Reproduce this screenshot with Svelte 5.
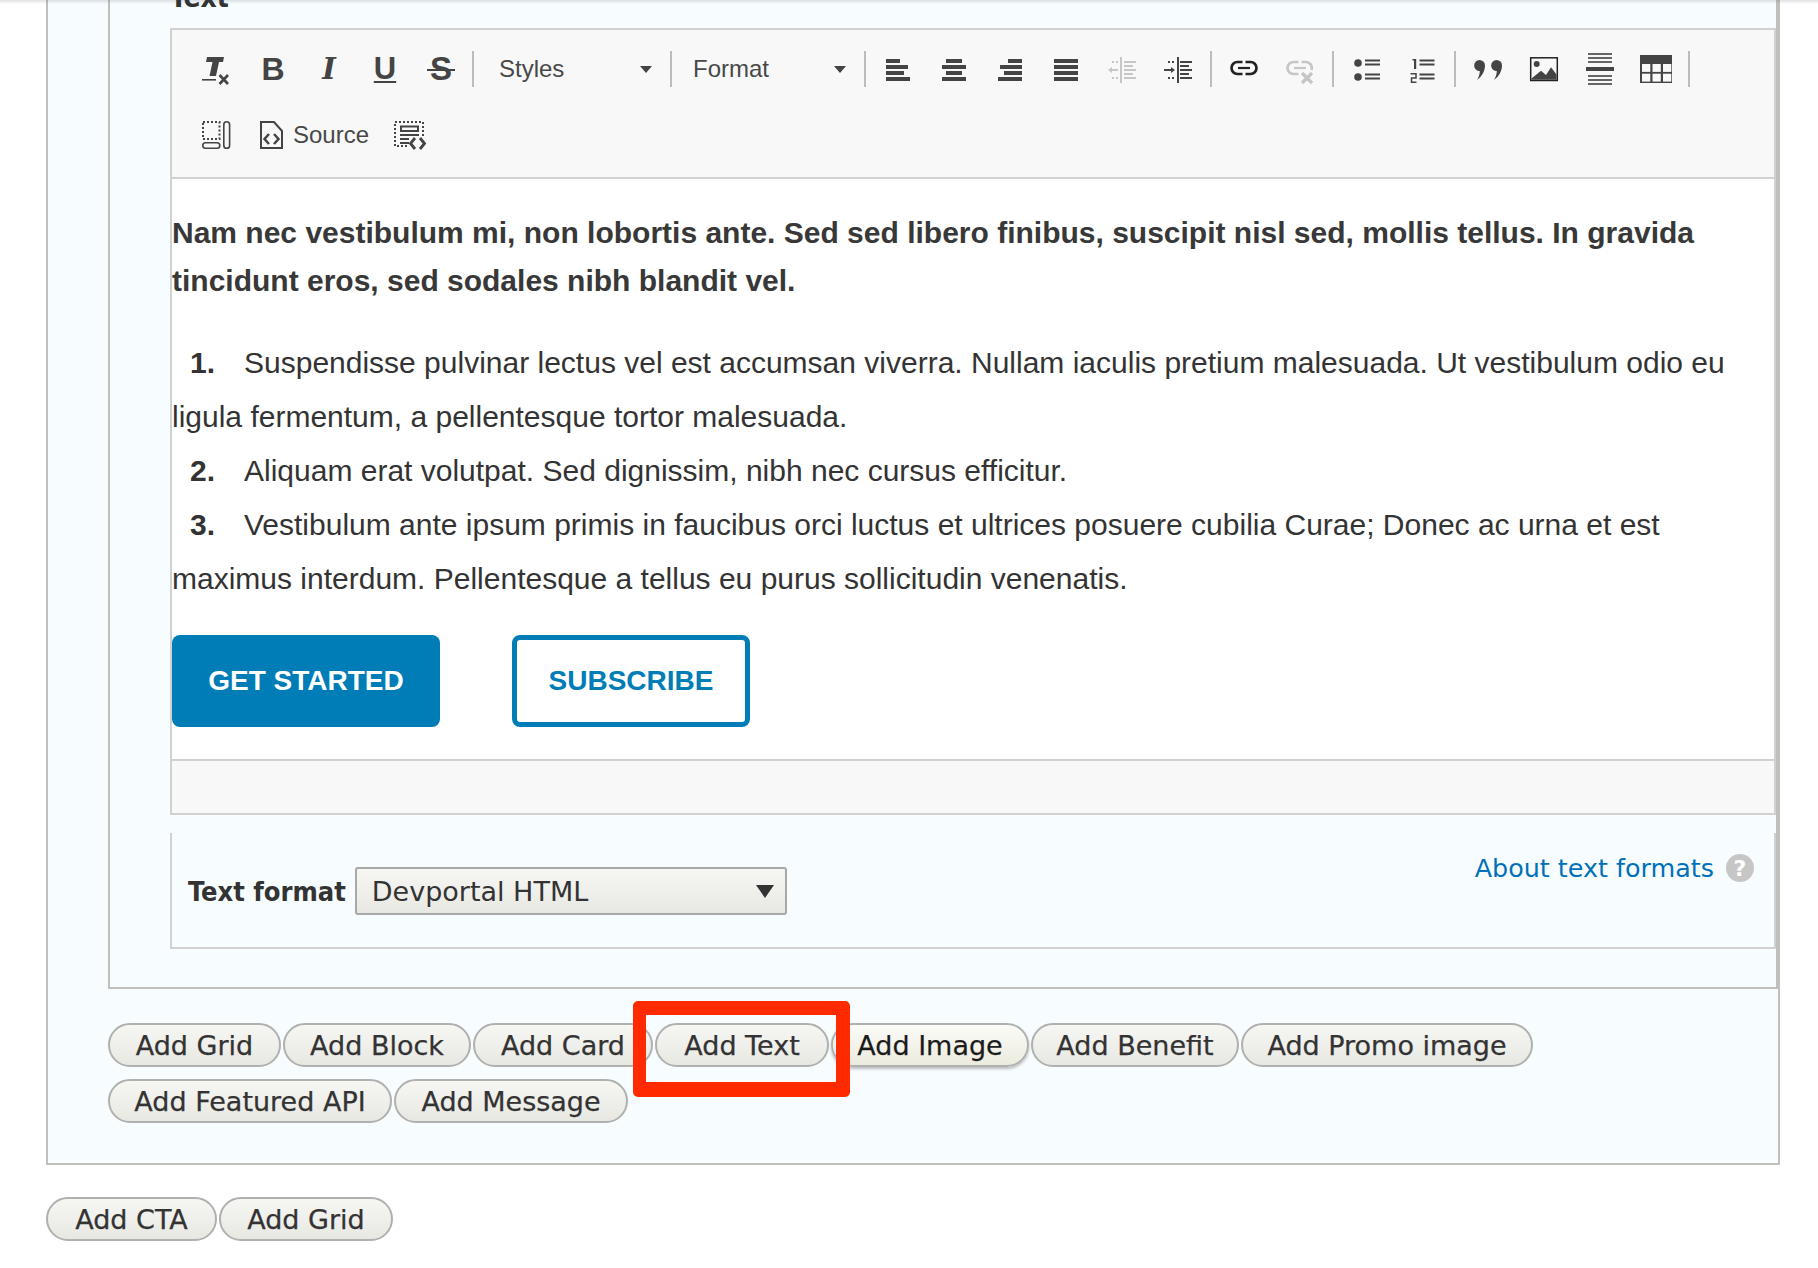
<script>
  const row1 = [['Add Grid',173],['Add Block',188],['Add Card',180],['Add Text',174],['Add Image',198],['Add Benefit',208],['Add Promo image',292],['Add Featured API',284],['Add Message',234]];
  const row2 = [['Add CTA',171],['Add Grid',174]];
  const items = [
    'Suspendisse pulvinar lectus vel est accumsan viverra. Nullam iaculis pretium malesuada. Ut vestibulum odio eu ligula fermentum, a pellentesque tortor malesuada.',
    'Aliquam erat volutpat. Sed dignissim, nibh nec cursus efficitur.',
    'Vestibulum ante ipsum primis in faucibus orci luctus et ultrices posuere cubilia Curae; Donec ac urna et est maximus interdum. Pellentesque a tellus eu purus sollicitudin venenatis.'
  ];
  const bars = {
    left: [[2,14],[2,22],[2,18],[2,24]],
    center: [[6,16],[2,24],[6,16],[2,24]],
    right: [[12,14],[4,22],[8,18],[2,24]],
    justify: [[2,24],[2,24],[2,24],[2,24]]
  };
</script>

<div class="shade"></div>
<div class="page">
  <div class="outer">
    <div class="inner">
      <div class="heading">Text</div>
      <div class="editor">
        <div class="toolbar">
          <div class="tbrow">
            <span class="slot"><svg class="ic" viewBox="0 0 28 28"><path d="M5 2H22L21 7H17L14 21H7.5L10.500 7H4Z" fill="#444"/><rect x="0" y="24" width="14" height="1.600" fill="#444"/><path d="M17.500 20L26 29M26 20L17.500 29" stroke="#444" stroke-width="2.600" fill="none"/></svg></span>
            <span class="slot"><span class="gl b">B</span></span>
            <span class="slot"><span class="gl i">I</span></span>
            <span class="slot"><span class="gl u">U</span></span>
            <span class="slot"><span class="gl s">S</span></span>
            <span class="sep"></span>
            <span class="combo styles">Styles<span class="caret"></span></span>
            <span class="sep"></span>
            <span class="combo format">Format<span class="caret"></span></span>
            <span class="sep"></span>
            {#each Object.values(bars) as set}
              <span class="slot"><svg class="ic" viewBox="0 0 28 28">{#each set as b, n}<rect x={b[0]} y={4 + n * 6} width={b[1]} height="4" fill="#444"/>{/each}</svg></span>
            {/each}
            <span class="slot"><svg class="ic" viewBox="0 0 28 28" fill="#c6c6c6"><rect x="12" y="2" width="2" height="26"/><rect x="16" y="6" width="12" height="2"/><rect x="16" y="10" width="9" height="2"/><rect x="16" y="14" width="12" height="2"/><rect x="16" y="18" width="9" height="2"/><rect x="16" y="22" width="12" height="2"/><path d="M0 15L4 12V14H10V16H4V18Z"/><rect x="4" y="6" width="2" height="2"/><rect x="8" y="6" width="2" height="2"/><rect x="4" y="22" width="2" height="2"/><rect x="8" y="22" width="2" height="2"/></svg></span>
            <span class="slot"><svg class="ic" viewBox="0 0 28 28" fill="#444"><rect x="13" y="2" width="2" height="26"/><rect x="16" y="6" width="12" height="2"/><rect x="16" y="10" width="9" height="2"/><rect x="16" y="14" width="12" height="2"/><rect x="16" y="18" width="9" height="2"/><rect x="16" y="22" width="12" height="2"/><path d="M11 15L7 12V14H0V16H7V18Z"/><rect x="4" y="6" width="2" height="2"/><rect x="8" y="6" width="2" height="2"/><rect x="4" y="22" width="2" height="2"/><rect x="8" y="22" width="2" height="2"/></svg></span>
            <span class="sep"></span>
            <span class="slot"><svg class="ic" viewBox="0 0 28 28" fill="none" stroke="#222" stroke-width="2.700"><path d="M12.500 7H7.500a6 6 0 0 0 0 12H12.500"/><path d="M15.500 7H20.500a6 6 0 0 1 0 12H15.500"/><path d="M8 13H20" stroke-width="2.200"/></svg></span>
            <span class="slot"><svg class="ic" viewBox="0 0 28 28" fill="none" stroke="#c6c6c6" stroke-width="2.700"><path d="M12.500 7H7.500a6 6 0 0 0 0 12H12.500"/><path d="M15.500 7H20.500a6 6 0 0 1 5 8"/><path d="M8 13H20" stroke-width="2.200"/><path d="M16 18L26 28M26 18L16 28" stroke-width="3.400"/></svg></span>
            <span class="sep"></span>
            <span class="slot"><svg class="ic" viewBox="0 0 28 28" fill="#444"><circle cx="6" cy="8" r="3.800"/><circle cx="6" cy="22" r="3.800"/><rect x="13" y="4.500" width="15" height="2"/><rect x="13" y="8.500" width="15" height="2"/><rect x="13" y="18.500" width="15" height="2"/><rect x="13" y="22.500" width="15" height="2"/></svg></span>
            <span class="slot"><svg class="ic" viewBox="0 0 28 28" fill="#444"><rect x="6" y="4" width="2.200" height="10"/><rect x="4.500" y="4" width="2" height="1.500"/><path d="M2.500 18.700H8V23H3.500V27.200H8.500" fill="none" stroke="#444" stroke-width="1.500"/><rect x="11.500" y="4.500" width="15" height="2"/><rect x="11.500" y="8.500" width="15" height="2"/><rect x="11.500" y="18.500" width="15" height="2"/><rect x="11.500" y="22.500" width="15" height="2"/></svg></span>
            <span class="sep"></span>
            <span class="slot"><svg class="ic" viewBox="0 0 28 28" fill="#444"><path d="M5.500 5a5.500 5.500 0 0 1 5.500 5.500c0 5.500-3 11-8 14.500 1.500-2.500 2.800-5.500 2.800-9a5.500 5.500 0 0 1-.3-11z"/><path d="M22.500 5a5.500 5.500 0 0 1 5.500 5.500c0 5.500-3 11-8 14.500 1.500-2.500 2.800-5.500 2.800-9a5.500 5.500 0 0 1-.3-11z"/></svg></span>
            <span class="slot"><svg class="ic" viewBox="0 0 28 28"><rect x=".7" y="2.800" width="26.600" height="22.700" fill="#f8f8f8" stroke="#222" stroke-width="1.500"/><circle cx="6.700" cy="9" r="3" fill="#444"/><path d="M1.500 24.800V23.500L11 15.700L16 20L21 12.300L26.500 19.500V24.800Z" fill="#444"/></svg></span>
            <span class="slot"><svg class="ic" viewBox="0 0 28 28" fill="#666"><rect x="2" y="-2" width="24" height="2"/><rect x="2" y="2" width="24" height="2"/><rect x="2" y="6" width="24" height="2"/><rect x="0" y="12" width="28" height="4" fill="#444"/><rect x="2" y="20" width="24" height="2"/><rect x="2" y="24" width="24" height="2"/><rect x="2" y="28" width="24" height="2"/></svg></span>
            <span class="slot"><svg class="ic" viewBox="0 0 28 28"><rect x="-2" y="0" width="32" height="28" fill="#444"/>{#each [0, 10.500, 21] as x}{#each [9, 18.700] as y}<rect {x} {y} width="8.300" height="7.900" fill="#f8f8f8"/>{/each}{/each}</svg></span>
            <span class="sep"></span>
          </div>
          <div class="tbrow">
            <span class="slot"><svg class="ic" viewBox="0 0 28 28" fill="none" stroke="#444"><rect x="1" y="1" width="16.500" height="17" stroke-width="2" stroke-dasharray="2 2"/><rect x="21.800" y=".8" width="5.800" height="26.500" rx="2.900" stroke-width="1.600"/><rect x=".8" y="21.800" width="17" height="5.500" rx="2.700" stroke-width="1.600"/></svg></span>
            <span class="source"><svg class="ic" viewBox="0 0 28 28"><path d="M5 1H18L26 10V27H5Z" fill="none" stroke="#444" stroke-width="2"/><path d="M13 13L8.500 18L13 23M18 13L22.500 18L18 23" fill="none" stroke="#444" stroke-width="2.500"/></svg><span>Source</span></span>
            <span class="slot"><svg class="ic" viewBox="0 0 28 28"><rect x="0" y="1" width="28" height="24" fill="none" stroke="#444" stroke-width="2" stroke-dasharray="2 2"/><g fill="#444"><rect x="5" y="4.500" width="19" height="2"/><rect x="5" y="9" width="19" height="2"/><rect x="5" y="6" width="2" height="4"/><rect x="22" y="6" width="2" height="4"/><rect x="5" y="13" width="19" height="2"/><rect x="5" y="17" width="11" height="2"/><rect x="5" y="21" width="9" height="2"/></g><rect x="14" y="16" width="17" height="14" fill="#f8f8f8"/><path d="M20 17L15.500 22.500L20 28M25 17L29.500 22.500L25 28" fill="none" stroke="#444" stroke-width="2.800"/></svg></span>
          </div>
        </div>
        <div class="content">
          <p class="lead">Nam nec vestibulum mi, non lobortis ante. Sed sed libero finibus, suscipit nisl sed, mollis tellus. In gravida tincidunt eros, sed sodales nibh blandit vel.</p>
          <ol>
            {#each items as item, n}
              <li><span class="num">{n + 1}.</span>{item}</li>
            {/each}
          </ol>
          <div class="cta">
            <span class="cbtn solid">GET STARTED</span>
            <span class="cbtn line">SUBSCRIBE</span>
          </div>
        </div>
        <div class="foot"></div>
      </div>
      <div class="filter">
        <div class="fmt">
          <span class="fmtlabel">Text format</span>
          <span class="select">Devportal HTML<span class="selarrow"></span></span>
        </div>
        <div class="tips">
          <span class="about">About text formats</span>
          <span class="help">?</span>
        </div>
      </div>
    </div>
    <div class="actions">
      {#each row1 as [label, w]}
        <span class="btn" class:hover={label === 'Add Image'} style:width="{w}px">{label}</span>
      {/each}
      <span class="redbox"></span>
    </div>
  </div>
  <div class="actions bottom">
    {#each row2 as [label, w]}
      <span class="btn" style:width="{w}px">{label}</span>
    {/each}
  </div>
</div>

<style>
  :global(body) { margin: 0; background: #fff; }
  .shade { position: absolute; left: 0; right: 0; top: 0; height: 4px; background: linear-gradient(rgba(60,70,80,.16), rgba(60,70,80,0)); z-index: 3; }
  .page { width: 1818px; height: 1268px; overflow: hidden; box-sizing: border-box; padding-left: 46px; font-family: "DejaVu Sans", sans-serif; color: #333; position: relative; }
  .outer { width: 1734px; box-sizing: border-box; background: #f7fcff; border: 2px solid #bfc0bb; border-top: 0; padding-left: 60px; }
  .inner { border: 2px solid #bfc0bb; border-top: 0; padding-left: 60px; padding-bottom: 38px; }
  .heading { height: 28px; font-weight: 700; font-size: 28px; line-height: 30px; color: #333; position: relative; top: -17px; font-stretch: condensed; }
  .editor { border: 2px solid #d1d1d1; font-family: "Liberation Sans", sans-serif; background: #fff; }
  .toolbar { background: #f8f8f8; border-bottom: 2px solid #d1d1d1; height: 149px; box-sizing: border-box; padding: 11px 0 0 16px; display: flex; flex-direction: column; gap: 10px; }
  .tbrow { display: flex; align-items: center; height: 56px; }
  .slot { width: 56px; height: 28px; display: flex; justify-content: center; align-items: center; flex: none; }
  .ic { width: 28px; height: 28px; overflow: visible; flex: none; display: block; }
  .gl { color: #444; font-weight: 700; font-family: "Liberation Sans", sans-serif; font-size: 32px; line-height: 28px; position: relative; left: 1px; }
  .gl.i { font-family: "DejaVu Serif", serif; font-style: italic; font-size: 29px; }
  .gl.u { text-decoration: underline; text-decoration-thickness: 2px; text-underline-offset: 2px; font-size: 31px; }
  .gl.s { font-size: 33px; }
  .gl.s::after { content: ""; position: absolute; left: -3px; right: -3px; top: 14px; height: 2px; background: #444; }
  .sep { width: 2px; height: 36px; background: #bcbcbc; margin: 0 4px; flex: none; }
  .combo { display: flex; align-items: center; height: 36px; margin: 0 -4px; box-sizing: border-box; font-size: 24px; color: #484848; flex: none; }
  .styles { width: 196px; padding-left: 25px; }
  .format { width: 192px; padding-left: 21px; }
  .caret { margin-left: auto; margin-right: 18px; width: 0; height: 0; border: 6px solid transparent; border-top: 7px solid #444; border-bottom: 0; }
  .source { display: flex; align-items: center; font-size: 24px; color: #484848; padding: 0 12px 0 12px; gap: 9px; height: 28px; flex: none; width: 137px; box-sizing: border-box; }
  .content { height: 580px; box-sizing: border-box; padding-top: 30px; font-size: 30px; color: #333; overflow: hidden; }
  .lead { margin: 0 0 31px; font-weight: 700; line-height: 48px; color: #383838; }
  ol { list-style: none; margin: 0 0 29px; padding: 0; line-height: 54px; }
  .num { display: inline-block; font-weight: 700; margin-left: 18px; width: 54px; }
  .cta { display: flex; gap: 72px; }
  .cbtn { box-sizing: border-box; height: 92px; display: flex; align-items: center; justify-content: center; border-radius: 8px; font-weight: 700; font-size: 28px; }
  .solid { width: 268px; background: #007cb6; color: #fff; }
  .line { width: 238px; border: 5px solid #007cb6; color: #007cb6; background: #fff; }
  .foot { height: 52px; background: #f8f8f8; border-top: 2px solid #d1d1d1; }
  .filter { margin-top: 18px; height: 114px; border: 2px solid #d1d1d1; border-top: 0; display: flex; justify-content: space-between; padding-left: 16px; padding-right: 20px; }
  .fmt { display: flex; align-items: center; gap: 9px; height: 116px; }
  .fmtlabel { font-weight: 700; font-size: 27px; font-stretch: condensed; color: #333; }
  .select { width: 432px; height: 48px; box-sizing: border-box; border: 2px solid #a8a8a8; border-radius: 3px; background: linear-gradient(#f6f6f3, #e8e8e3); display: flex; align-items: center; padding-left: 15px; font-size: 27px; color: #333; position: relative; }
  .selarrow { position: absolute; left: 399px; top: 16px; width: 0; height: 0; border: 9px solid transparent; border-top: 13px solid #333; border-bottom: 0; }
  .tips { display: flex; align-items: center; gap: 12px; height: 70px; }
  .about { color: #0071b8; font-size: 25.400px; }
  .help { width: 28px; height: 28px; border-radius: 50%; background: #c6c6c6; color: #fff; font-weight: 700; font-size: 22px; display: flex; align-items: center; justify-content: center; }
  .actions { display: flex; flex-wrap: wrap; gap: 12px 2px; padding: 34px 0 40px; position: relative; width: 1500px; }
  .actions.bottom { padding: 32px 0 0; }
  .btn { box-sizing: border-box; height: 44px; border: 2px solid #b0b0ae; border-radius: 22px; background: linear-gradient(#f6f6f3, #e8e8e3); display: flex; align-items: center; justify-content: center; font-size: 27px; color: #333; white-space: nowrap; -webkit-text-stroke: .25px #333; }
  .btn.hover { color: #1a1a1a; background: linear-gradient(#fbfbf7, #ecebdf); box-shadow: 0 2px 3px rgba(0,0,0,.25); }
  .redbox { position: absolute; left: 525px; top: 12px; width: 217px; height: 96px; box-sizing: border-box; border: solid #ff2a00; border-width: 14px 14px 15px 13px; border-radius: 5px; pointer-events: none; }
</style>
